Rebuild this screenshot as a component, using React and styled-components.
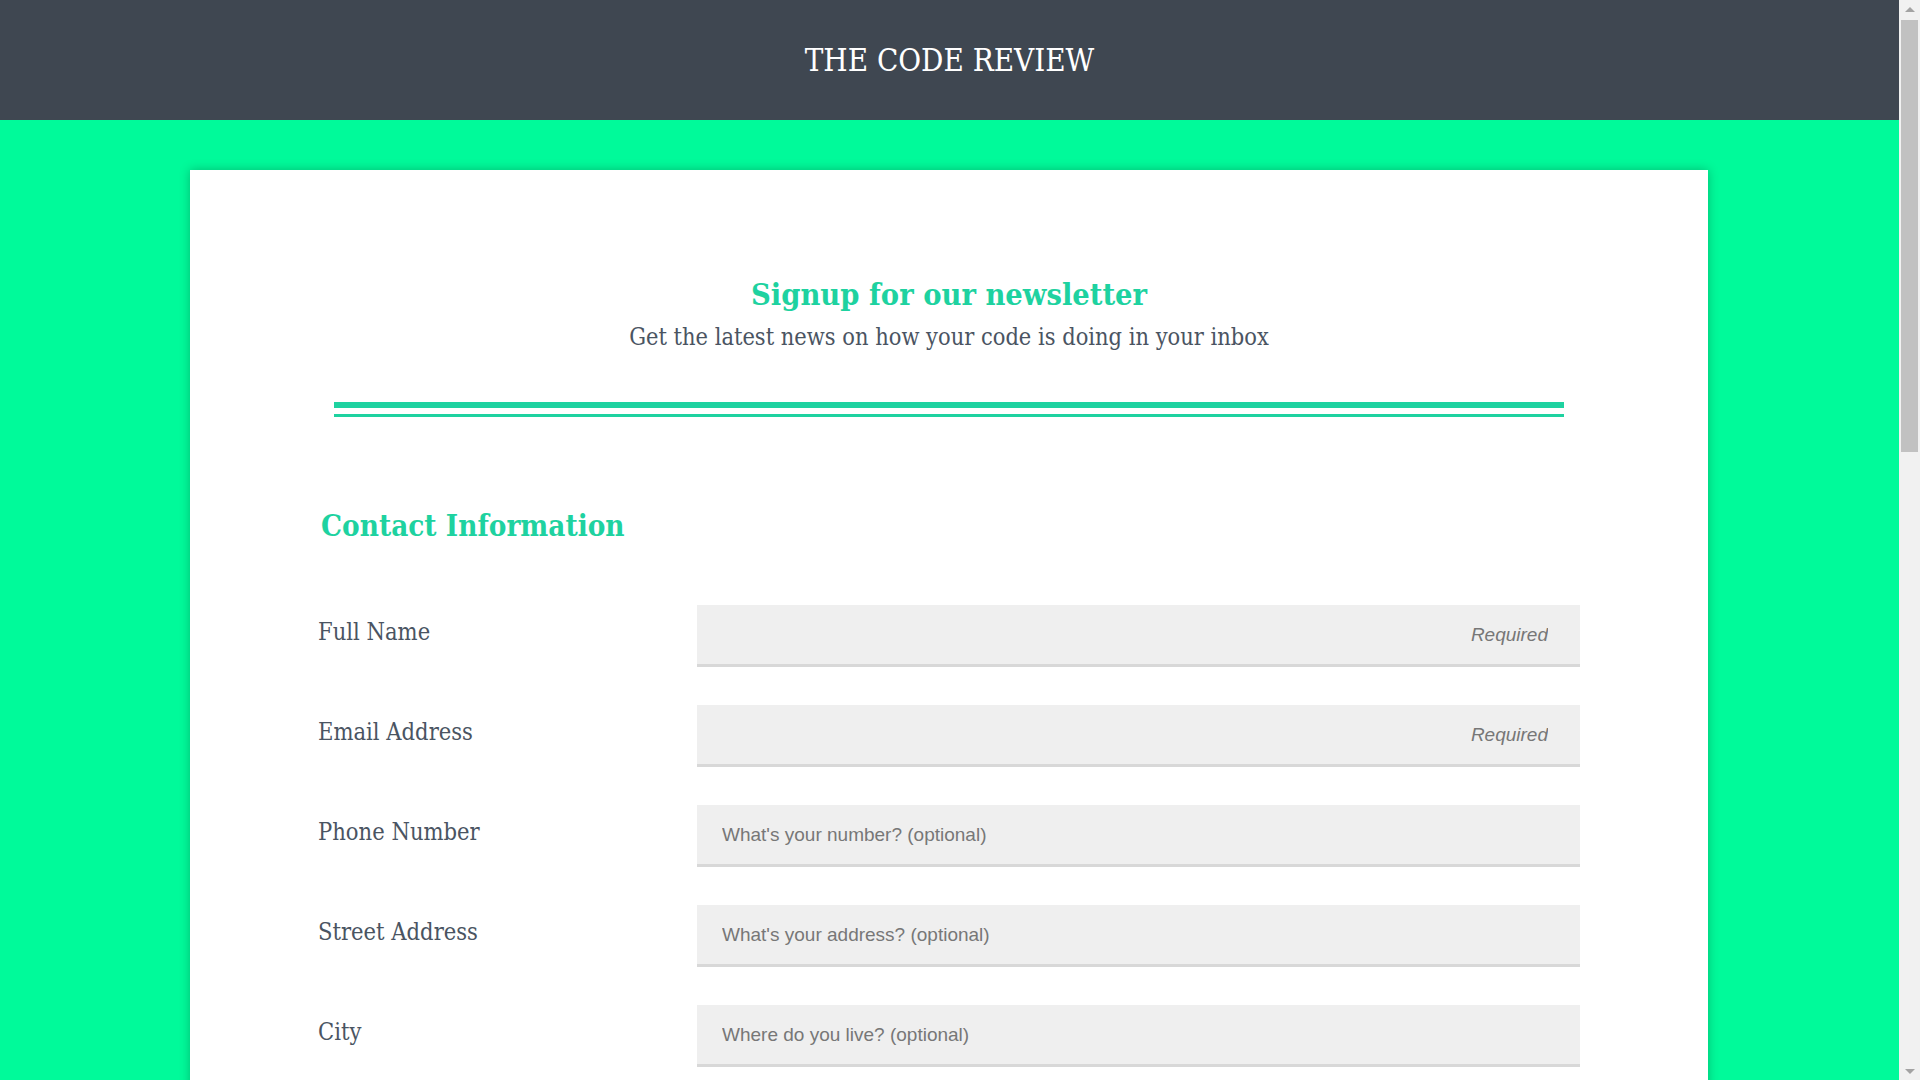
import styled, { createGlobalStyle } from "styled-components";

const fieldList = [
  { label: "Full Name", placeholder: "Required", required: true },
  { label: "Email Address", placeholder: "Required", required: true },
  { label: "Phone Number", placeholder: "What's your number? (optional)" },
  { label: "Street Address", placeholder: "What's your address? (optional)" },
  { label: "City", placeholder: "Where do you live? (optional)" },
];

const Field = ({ label, placeholder, required }) => {
  return (
    <FieldRow>
      <Label>{label}</Label>
      <Input type="text" placeholder={placeholder} $required={required} />
    </FieldRow>
  );
};

// 화면 오른쪽 스크롤바 모양
const ScrollBar = () => {
  return (
    <Track>
      <Arrow $dir="up" />
      <Thumb />
      <Arrow $dir="down" />
    </Track>
  );
};

const App = () => {
  return (
    <>
      <GlobalStyle />
      <Page>
        <Header>
          <Title>THE CODE REVIEW</Title>
        </Header>
        <Main>
          <Card>
            <Intro>
              <Heading>Signup for our newsletter</Heading>
              <Subtitle>Get the latest news on how your code is doing in your inbox</Subtitle>
            </Intro>
            <Divider />
            <Form>
              <SectionTitle>Contact Information</SectionTitle>
              {fieldList.map((it, idx) => (
                <Field key={idx} {...it} />
              ))}
            </Form>
          </Card>
        </Main>
      </Page>
      <ScrollBar />
    </>
  );
};

export default App;

const GlobalStyle = createGlobalStyle`
  body {
    margin: 0;
    background-color: #00fa9a;
    font-family: "DejaVu Serif Condensed", "DejaVu Serif", "Liberation Serif", serif;
  }
`;

const Page = styled.div`
  margin-right: 21px;
`;

const Header = styled.header`
  height: 120px;
  background-color: #3f4751;
  display: flex;
  align-items: center;
  justify-content: center;
`;

const Title = styled.h1`
  margin: 0;
  color: #ffffff;
  font-size: 31px;
  font-weight: normal;
`;

const Main = styled.main`
  padding: 50px 191px 60px 190px;
`;

const Card = styled.div`
  background-color: #ffffff;
  box-shadow: 0 0 10px rgba(0, 0, 0, 0.25);
  padding: 104px 128px 200px;
`;

const Intro = styled.div`
  text-align: center;
`;

const Heading = styled.h2`
  margin: 0;
  color: #1ed2a0;
  font-size: 30.5px;
  line-height: 40px;
  font-weight: bold;
`;

const Subtitle = styled.p`
  margin: 8px 0 0;
  color: #4a5462;
  font-size: 23.4px;
  line-height: 30px;
`;

const Divider = styled.div`
  margin: 50px 16px 0;
  height: 6px;
  border-top: 6px solid #1ed2a0;
  border-bottom: 3px solid #1ed2a0;
`;

const Form = styled.form`
  margin-top: 89px;
`;

const SectionTitle = styled.h3`
  margin: 0 0 59px 3px;
  color: #1ed2a0;
  font-size: 29.4px;
  line-height: 40px;
  font-weight: bold;
`;

const FieldRow = styled.div`
  display: flex;
  align-items: flex-start;
  margin-bottom: 38px;
`;

const Label = styled.label`
  width: 379px;
  flex-shrink: 0;
  padding-top: 13px;
  color: #4a5462;
  font-size: 23.5px;
  line-height: 28px;
`;

const Input = styled.input`
  flex-grow: 1;
  height: 62px;
  box-sizing: border-box;
  border: none;
  border-bottom: 3px solid #d8d8d8;
  background-color: #efefef;
  padding: 0 32px 0 25px;
  font-family: "Liberation Sans", Arial, sans-serif;
  font-size: 19px;
  color: #333333;
  text-align: ${(props) => (props.$required ? "right" : "left")};
  outline: none;

  &::placeholder {
    color: #777777;
    font-style: ${(props) => (props.$required ? "italic" : "normal")};
  }
`;

const Track = styled.div`
  position: fixed;
  top: 0;
  right: 0;
  width: 21px;
  height: 100vh;
  background-color: #f1f1f1;
  display: flex;
  flex-direction: column;
  align-items: center;
`;

const Arrow = styled.div`
  flex-shrink: 0;
  width: 0;
  height: 0;
  margin: 7px 0 6px;
  border-left: 5px solid transparent;
  border-right: 5px solid transparent;
  border-${(props) => (props.$dir === "up" ? "bottom" : "top")}: 5px solid #a3a3a3;
  ${(props) => (props.$dir === "down" ? "margin-top: auto;" : "")}
`;

const Thumb = styled.div`
  width: 17px;
  height: 432px;
  margin-top: 2px;
  background-color: #c1c1c1;
`;
